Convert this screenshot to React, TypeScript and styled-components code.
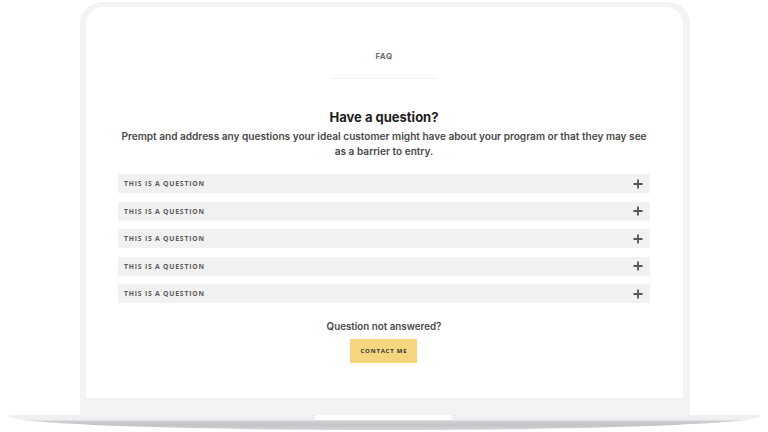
import React from "react";
import styled, { createGlobalStyle } from "styled-components";

const Global = createGlobalStyle`
  html, body { margin: 0; padding: 0; background: #ffffff; }
  body { width: 768px; height: 432px; overflow: hidden; font-family: Inter, "Noto Sans", sans-serif; }
  * { box-sizing: border-box; }
`;

const Page = styled.div`
  width: 768px;
  height: 432px;
  padding-top: 2px;
  display: flex;
  flex-direction: column;
  align-items: center;
  background: #ffffff;
`;

const Lid = styled.div`
  width: 610px;
  height: 413px;
  margin-left: 1px;
  padding: 5px 7px 17px 6px;
  background: #f3f3f3;
  border-radius: 22px 22px 0 0;
  display: flex;
`;

const Screen = styled.div`
  flex: 1;
  background: #ffffff;
  border-radius: 17px 17px 0 0;
  display: flex;
  flex-direction: column;
  align-items: center;
  padding-top: 44px;
`;

const Eyebrow = styled.div`
  font-family: Inter, sans-serif;
  font-size: 8px;
  line-height: 10px;
  font-weight: 700;
  color: #707070;
  letter-spacing: 0.4px;
`;

const Divider = styled.div`
  width: 106px;
  height: 1px;
  background: #eeeeee;
  margin-top: 17px;
`;

const Heading = styled.h2`
  margin: 29px 0 0;
  font-family: Inter, sans-serif;
  font-size: 13px;
  line-height: 18px;
  font-weight: 700;
  color: #1e1e1e;
`;

const Lead = styled.p`
  margin: 3px 0 0;
  font-family: Inter, sans-serif;
  font-size: 10.1px;
  line-height: 15px;
  font-weight: 600;
  color: #4a4a4a;
  text-align: center;
  white-space: nowrap;
`;

const List = styled.div`
  width: 532px;
  margin-top: 15px;
  display: flex;
  flex-direction: column;
  gap: 8.5px;
`;

const Row = styled.div`
  height: 19px;
  background: #f1f1f1;
  display: flex;
  align-items: center;
  justify-content: space-between;
  padding: 0 7px 0 6px;
`;

const Question = styled.span`
  font-family: "Open Sans", sans-serif;
  font-size: 6.8px;
  font-weight: 700;
  letter-spacing: 0.8px;
  color: #5a5a5a;
`;

const Plus = styled.svg`
  width: 10px;
  height: 10px;
  display: block;
`;

const Footer = styled.div`
  margin-top: 17px;
  display: flex;
  flex-direction: column;
  align-items: center;
  gap: 5px;
`;

const FooterText = styled.div`
  font-family: Inter, sans-serif;
  font-size: 9.8px;
  line-height: 14px;
  font-weight: 600;
  color: #4a4a4a;
`;

const Button = styled.button`
  width: 67px;
  height: 24px;
  border: none;
  background: #f5d67e;
  font-family: "Open Sans", sans-serif;
  font-size: 6px;
  font-weight: 700;
  letter-spacing: 0.8px;
  color: #333333;
  padding: 0;
  cursor: pointer;
`;

const Base = styled.div`
  position: relative;
  width: 751px;
  height: 15px;
  background: linear-gradient(to bottom, #f1f1f2 0px, #eeeff0 5px, #cfd0d3 6px, #c3c4c8 10px, #d3d4d7 15px);
  border-radius: 0 0 380px 380px / 0 0 14px 14px;
`;

const Notch = styled.div`
  position: absolute;
  left: 303px;
  top: 0;
  width: 143px;
  height: 5px;
  background: linear-gradient(to right, #e6e6e7 0px, #ffffff 5px, #ffffff 138px, #e6e6e7 143px);
  border-radius: 0 0 4px 4px;
`;

const questions = Array.from({ length: 5 }, () => "THIS IS A QUESTION");

export default function App() {
  return (
    <>
      <Global />
      <Page>
        <Lid>
          <Screen>
            <Eyebrow>FAQ</Eyebrow>
            <Divider />
            <Heading>Have a question?</Heading>
            <Lead>
              Prempt and address any questions your ideal customer might have about your program or that they may see
              <br />
              as a barrier to entry.
            </Lead>
            <List>
              {questions.map((q, i) => (
                <Row key={i}>
                  <Question>{q}</Question>
                  <Plus viewBox="0 0 10 10">
                    <path d="M5 0.5V9.5M0.5 5H9.5" stroke="#555555" strokeWidth="1.8" />
                  </Plus>
                </Row>
              ))}
            </List>
            <Footer>
              <FooterText>Question not answered?</FooterText>
              <Button>CONTACT ME</Button>
            </Footer>
          </Screen>
        </Lid>
        <Base>
          <Notch />
        </Base>
      </Page>
    </>
  );
}
